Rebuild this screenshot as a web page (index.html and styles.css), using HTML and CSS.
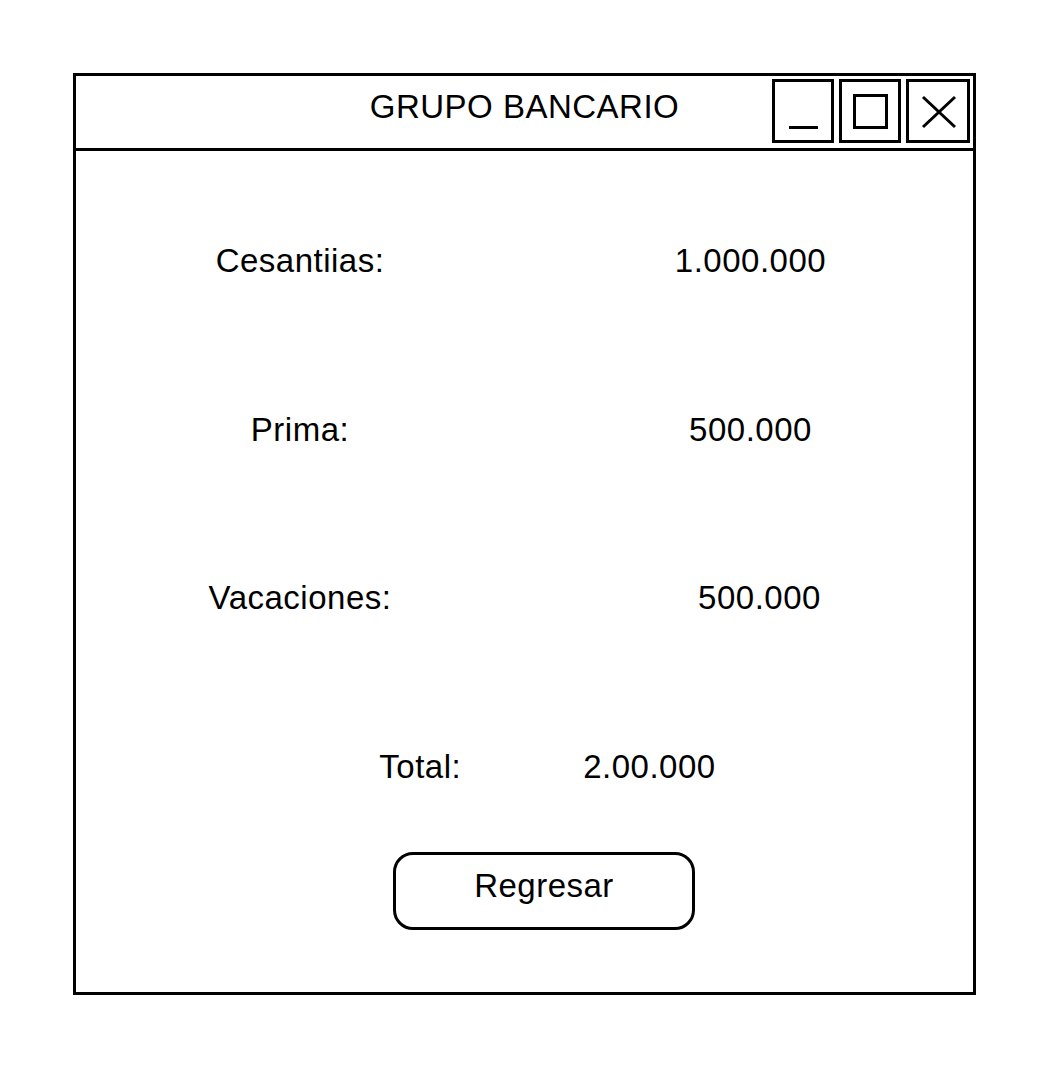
FILE: index.html
```html
<!DOCTYPE html>
<html lang="es">
<head>
<meta charset="utf-8">
<title>GRUPO BANCARIO</title>
<link rel="stylesheet" href="styles.css">
</head>
<body>
<div class="window">
  <div class="titlebar">
    <div class="title">GRUPO BANCARIO</div>
    <div class="controls">
      <div class="ctrl">
        <svg width="56" height="58" viewBox="0 0 56 58"><rect x="14" y="44" width="29" height="3" fill="#000"/></svg>
      </div>
      <div class="ctrl">
        <svg width="56" height="58" viewBox="0 0 56 58"><rect x="12.5" y="13.5" width="32" height="32" fill="none" stroke="#000" stroke-width="3"/></svg>
      </div>
      <div class="ctrl ctrl-wide">
        <svg width="58" height="58" viewBox="0 0 58 58"><path d="M14 15 L46 45 M46 15 L14 45" stroke="#000" stroke-width="3" fill="none"/></svg>
      </div>
    </div>
  </div>
  <div class="content">
    <div class="row">
      <span class="label">Cesantiias:</span>
      <span class="value">1.000.000</span>
    </div>
    <div class="row">
      <span class="label">Prima:</span>
      <span class="value">500.000</span>
    </div>
    <div class="row">
      <span class="label">Vacaciones:</span>
      <span class="value value-shift">500.000</span>
    </div>
    <div class="total">
      <span class="total-label">Total:</span>
      <span class="total-value">2.00.000</span>
    </div>
    <div class="btn">Regresar</div>
  </div>
</div>
</body>
</html>
```

FILE: styles.css
```css
html, body {
  margin: 0;
  background: #fff;
}
body {
  padding: 73px 0 0 73px;
  font-family: "Liberation Sans", Arial, sans-serif;
  color: #000;
}
.window {
  box-sizing: border-box;
  width: 903px;
  height: 922px;
  border: 3px solid #000;
  display: flex;
  flex-direction: column;
}
.titlebar {
  height: 72px;
  border-bottom: 3px solid #000;
  display: grid;
  grid-template-columns: 1fr auto 1fr;
  align-items: start;
}
.title {
  grid-column: 2;
  margin-top: 15px;
  font-size: 33px;
  line-height: 32px;
  letter-spacing: 0.5px;
  white-space: nowrap;
}
.controls {
  grid-column: 3;
  justify-self: end;
  display: flex;
  gap: 5px;
  margin-top: 3px;
  margin-right: 3px;
}
.ctrl {
  width: 56px;
  height: 58px;
  border: 3px solid #000;
}
.ctrl-wide {
  width: 58px;
}
.ctrl svg {
  display: block;
}
.content {
  flex: 1;
  display: flex;
  flex-direction: column;
  align-items: stretch;
  padding-top: 94px;
  font-size: 33px;
  line-height: 32px;
  letter-spacing: 0.5px;
}
.row {
  display: grid;
  grid-template-columns: 448px 449px;
  margin-bottom: 136.5px;
}
.label, .value {
  text-align: center;
  white-space: nowrap;
}
.value {
  padding-left: 4px;
}
.value-shift {
  padding-left: 22px;
}
.total {
  display: flex;
  justify-content: center;
  gap: 122px;
  padding-left: 46px;
}
.btn {
  align-self: center;
  margin-top: 69.5px;
  margin-left: 39px;
  box-sizing: border-box;
  width: 302px;
  height: 78px;
  border: 3px solid #000;
  border-radius: 20px;
  text-align: center;
  padding-top: 15px;
}
```
